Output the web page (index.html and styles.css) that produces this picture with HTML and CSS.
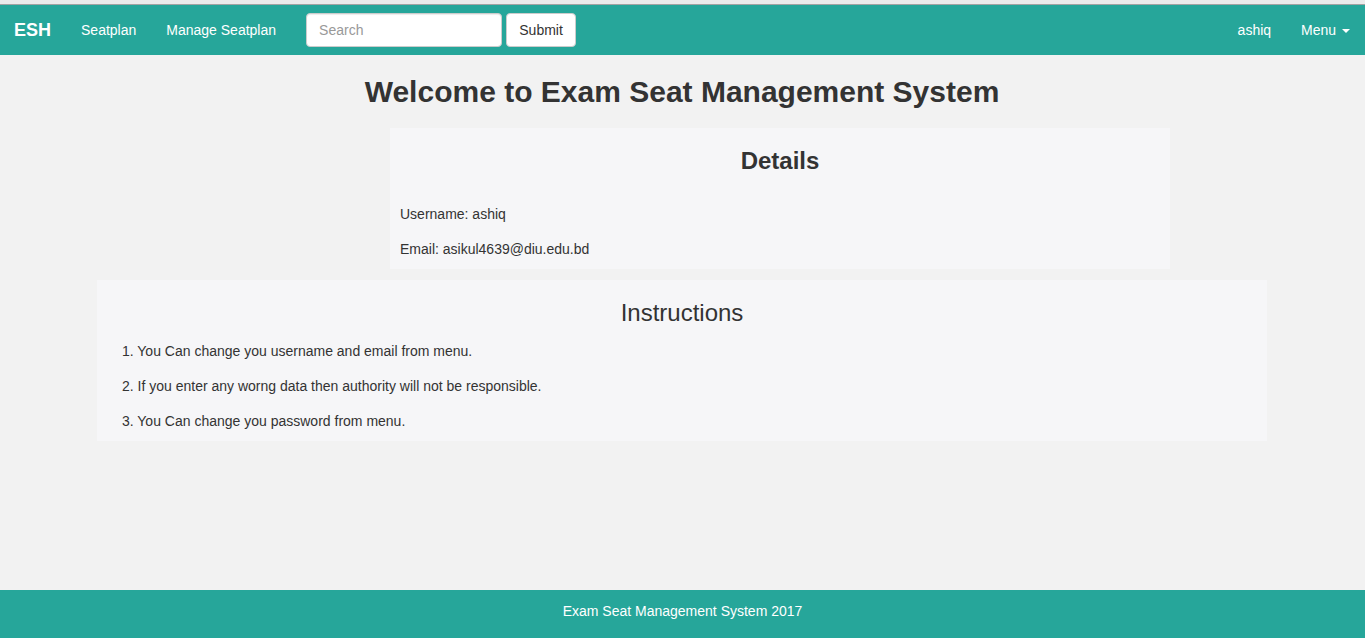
FILE: index.html
```html
<!DOCTYPE html>
<html lang="en">
<head>
<meta charset="utf-8">
<title>Exam Seat Management System</title>
<link rel="stylesheet" href="styles.css">
</head>
<body>
<div class="topstrip"></div>
<nav class="navbar">
  <div class="nav-left">
    <a class="brand" href="#">ESH</a>
    <a class="nav-link" href="#">Seatplan</a>
    <a class="nav-link" href="#">Manage Seatplan</a>
    <form class="nav-form">
      <input class="search" type="text" placeholder="Search">
      <button class="btn" type="button">Submit</button>
    </form>
  </div>
  <div class="nav-right">
    <a class="nav-link" href="#">ashiq</a>
    <a class="nav-link" href="#">Menu <span class="caret"></span></a>
  </div>
</nav>
<main class="main">
  <h1 class="title">Welcome to Exam Seat Management System</h1>
  <div class="container">
    <div class="details-row">
      <section class="card details">
        <h2 class="details-title">Details</h2>
        <p class="line first">Username: ashiq</p>
        <p class="line">Email: asikul4639@diu.edu.bd</p>
      </section>
    </div>
    <section class="card instructions">
      <h2 class="instr-title">Instructions</h2>
      <p class="line first">1. You Can change you username and email from menu.</p>
      <p class="line">2. If you enter any worng data then authority will not be responsible.</p>
      <p class="line">3. You Can change you password from menu.</p>
    </section>
  </div>
</main>
<footer class="footer">Exam Seat Management System 2017</footer>
</body>
</html>
```
FILE: styles.css
```css
* { box-sizing: border-box; }
html, body { margin: 0; padding: 0; }
body {
  font-family: "Liberation Sans", Arial, sans-serif;
  font-size: 14px;
  line-height: 20px;
  color: #333;
  background: #f2f2f2;
  min-height: 100vh;
  display: flex;
  flex-direction: column;
}
.topstrip {
  height: 5px;
  background: #ebebeb;
  border-bottom: 1px solid #a3a3a3;
}
.navbar {
  height: 50px;
  background: #26a69a;
  display: flex;
  justify-content: space-between;
  align-items: center;
}
.nav-left, .nav-right { display: flex; align-items: center; height: 100%; }
.navbar a { color: #fff; text-decoration: none; }
.brand {
  font-size: 18px;
  font-weight: bold;
  padding: 0 15px 0 14px;
  line-height: 50px;
}
.nav-link {
  padding: 0 15px;
  line-height: 50px;
  font-size: 14px;
}
.nav-form {
  display: flex;
  align-items: center;
  gap: 4px;
  padding: 0 15px;
  margin: 0;
}
.search {
  width: 196px;
  height: 34px;
  padding: 6px 12px;
  font: 14px "Liberation Sans", Arial, sans-serif;
  color: #555;
  background: #fff;
  border: 1px solid #ccc;
  border-radius: 4px;
  box-shadow: inset 0 1px 1px rgba(0,0,0,.075);
}
.search::placeholder { color: #999; }
.btn {
  height: 34px;
  width: 70px;
  padding: 6px 12px;
  font: 14px "Liberation Sans", Arial, sans-serif;
  color: #333;
  background: #fff;
  border: 1px solid #ccc;
  border-radius: 4px;
}
.caret {
  display: inline-block;
  width: 0;
  height: 0;
  margin-left: 2px;
  vertical-align: middle;
  border-top: 4px solid #fff;
  border-left: 4px solid transparent;
  border-right: 4px solid transparent;
}
.main { flex: 1; padding-right: 1px; }
.title {
  font-size: 30px;
  line-height: 33px;
  font-weight: bold;
  text-align: center;
  margin: 20px 0 20px;
}
.container {
  width: 1170px;
  margin: 0 auto;
}
.details-row { padding-left: 293px; }
.card { background: #f6f6f8; }
.details {
  width: 780px;
  padding: 20px 10px 10px;
}
.details-title {
  font-size: 24px;
  line-height: 26px;
  font-weight: bold;
  text-align: center;
  margin: 0 0 30px;
}
.line { margin: 15px 0 0; }
.line.first { margin-top: 0; }
.instructions {
  margin-top: 11px;
  padding: 20px 25px 10px;
}
.instr-title {
  font-size: 24px;
  line-height: 26px;
  font-weight: normal;
  text-align: center;
  margin: 0 0 15px;
}
.footer {
  height: 48px;
  background: #26a69a;
  color: #fff;
  text-align: center;
  line-height: 20px;
  padding-top: 11px;
}
```
